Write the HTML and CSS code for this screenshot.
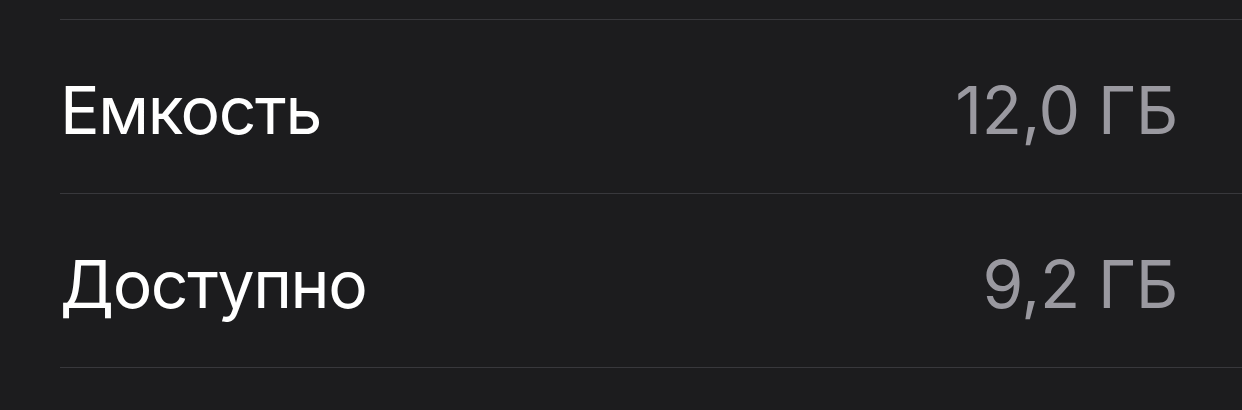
FILE: index.html
```html
<!DOCTYPE html>
<html lang="ru">
<head>
    <meta charset="UTF-8">
    <meta name="viewport" content="width=device-width, initial-scale=1.0">
    <title>Хранилище</title>
    <link rel="stylesheet" href="styles.css">
</head>
<body>

    <ul class="list">
        <li class="row">
            <span class="label">Емкость</span>
            <span class="value">12,0 ГБ</span>
        </li>
        <li class="row">
            <span class="label">Доступно</span>
            <span class="value">9,2 ГБ</span>
        </li>
    </ul>

</body>
</html>
```

FILE: styles.css
```css
html, body {
    margin: 0;
    padding: 0;
    background-color: #1c1c1e;
}

body {
    font-family: Inter, "Noto Sans", sans-serif;
    height: 410px;
    overflow: hidden;
}

.list {
    list-style: none;
    margin: 19px 0 0 60px;
    padding: 0;
    border-top: 1px solid #38383c;
}

.row {
    box-sizing: border-box;
    display: flex;
    justify-content: space-between;
    align-items: center;
    height: 174px;
    padding: 7px 64px 0 0;
    border-bottom: 1px solid #38383c;
    font-size: 66px;
    line-height: 80px;
}

.label {
    color: #ffffff;
    letter-spacing: -1.4px;
}

.value {
    color: #9a99a0;
    letter-spacing: -0.4px;
}
```
